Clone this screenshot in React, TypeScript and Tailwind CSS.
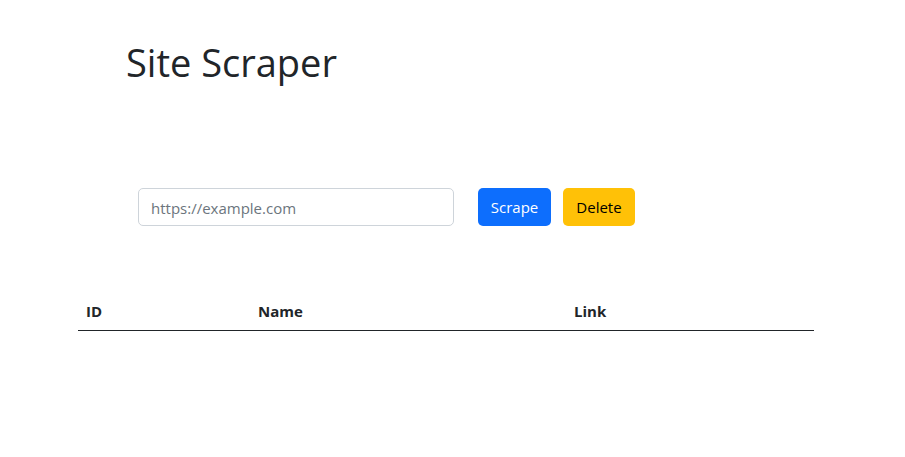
export default function App() {
  return (
    <div className="min-h-[457px] w-full bg-white text-[#212529] font-['Open_Sans',sans-serif]">
      {/* Title */}
      <div className="pl-[126px] pt-[39px]">
        <h1 className="text-[38px] leading-[46px] font-normal">Site Scraper</h1>
      </div>

      {/* Form */}
      <div className="flex items-center pl-[138px] mt-[103px]">
        <input
          type="text"
          placeholder="https://example.com"
          className="w-[316px] h-[38px] px-3 pt-[1px] text-[15px] border border-[#ced4da] rounded-[5px] placeholder:text-[#6c757d] outline-none"
        />
        <button className="ml-[24px] h-[38px] w-[73px] pt-[1px] rounded-[5px] bg-[#0d6efd] text-white text-[15px]">
          Scrape
        </button>
        <button className="ml-[12px] h-[38px] w-[72px] pt-[1px] rounded-[5px] bg-[#ffc107] text-black text-[15px]">
          Delete
        </button>
      </div>

      {/* Table */}
      <div className="pl-[78px] mt-[65px]">
        <table className="w-[736px] border-collapse text-left">
          <thead>
            <tr className="border-b border-[#212529]">
              <th className="w-[172px] px-2 pt-2 pb-[7px] font-bold text-[15px] leading-6">ID</th>
              <th className="w-[316px] px-2 pt-2 pb-[7px] font-bold text-[15px] leading-6">Name</th>
              <th className="px-2 pt-2 pb-[7px] font-bold text-[15px] leading-6">Link</th>
            </tr>
          </thead>
          <tbody></tbody>
        </table>
      </div>
    </div>
  );
}
